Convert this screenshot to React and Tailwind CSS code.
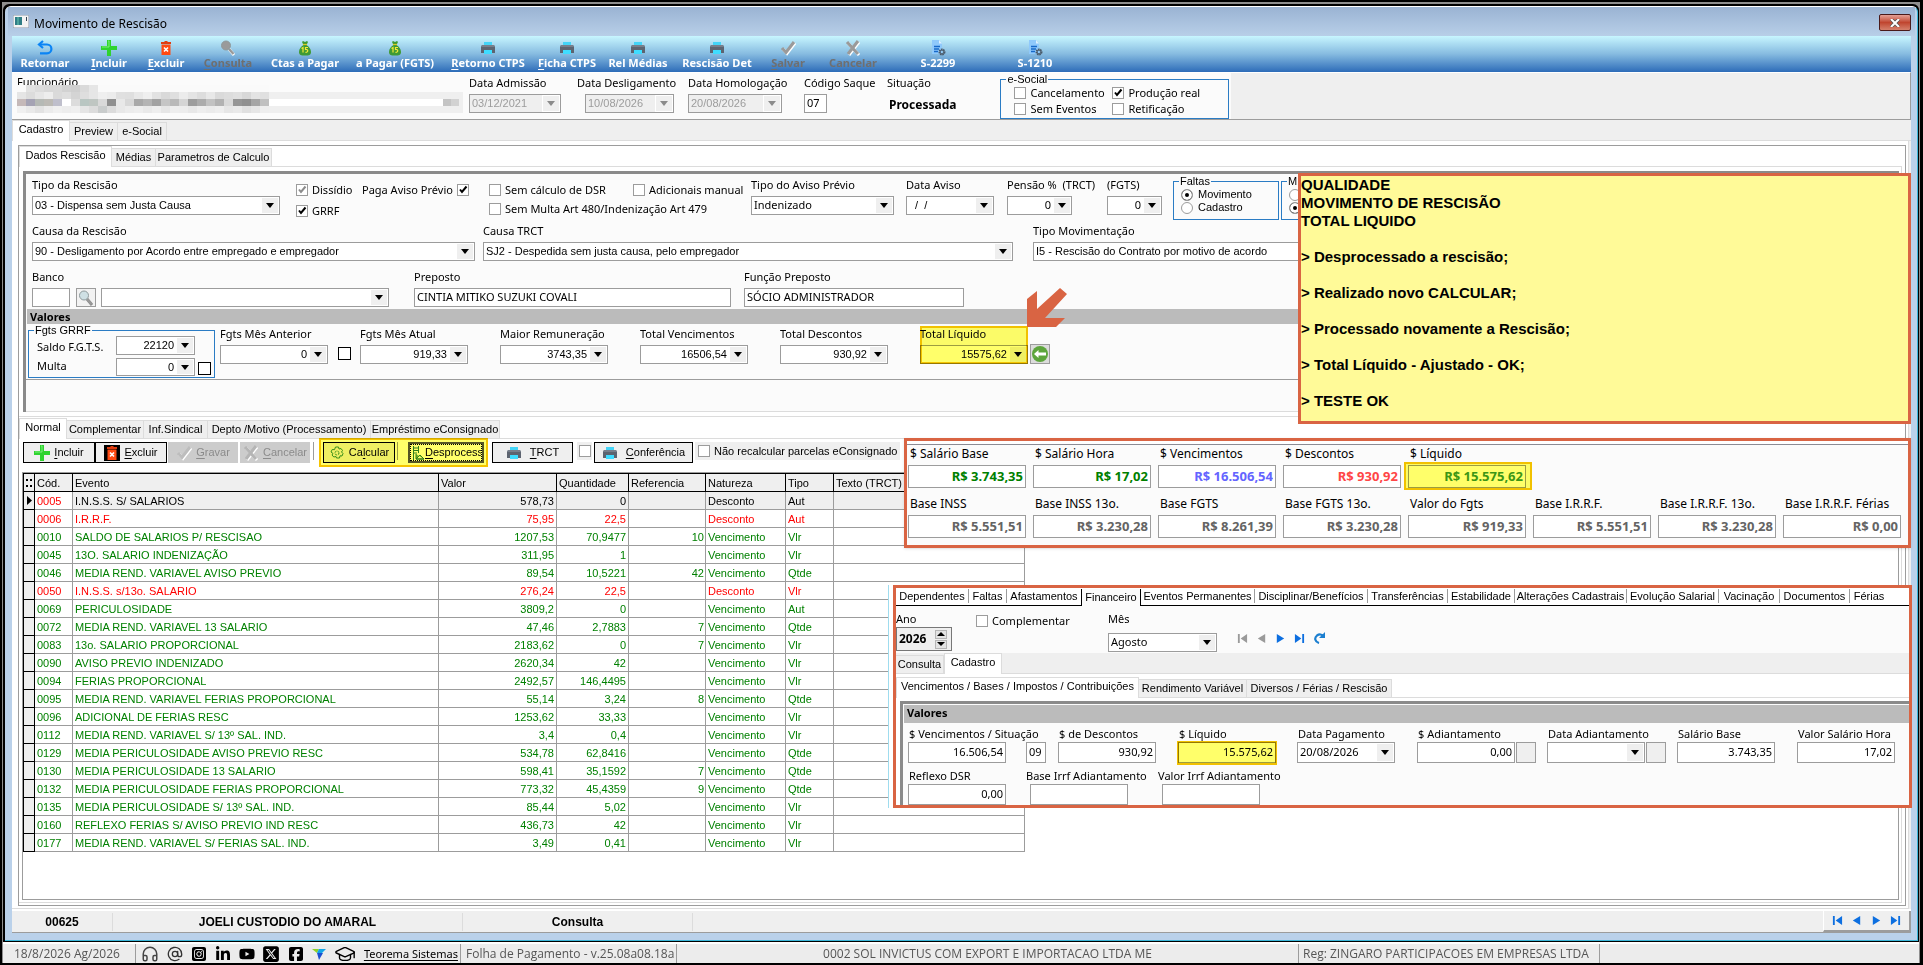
import { useId } from "react";
import { AtSign, GraduationCap, Headphones } from "lucide-react";
import { FaLinkedinIn, FaSquareFacebook, FaSquareInstagram, FaSquareXTwitter, FaYoutube } from "react-icons/fa6";

const events = [
  ["0005", "I.N.S.S. S/ SALARIOS", "578,73", "0", "", "Desconto", "Aut"],
  ["0006", "I.R.R.F.", "75,95", "22,5", "", "Desconto", "Aut"],
  ["0010", "SALDO DE SALARIOS P/ RESCISAO", "1207,53", "70,9477", "10", "Vencimento", "Vlr"],
  ["0045", "13O. SALARIO INDENIZAÇÃO", "311,95", "1", "", "Vencimento", "Vlr"],
  ["0046", "MEDIA REND. VARIAVEL AVISO PREVIO", "89,54", "10,5221", "42", "Vencimento", "Qtde"],
  ["0050", "I.N.S.S. s/13o. SALARIO", "276,24", "22,5", "", "Desconto", "Vlr"],
  ["0069", "PERICULOSIDADE", "3809,2", "0", "", "Vencimento", "Aut"],
  ["0072", "MEDIA REND. VARIAVEL 13 SALARIO", "47,46", "2,7883", "7", "Vencimento", "Qtde"],
  ["0083", "13o. SALARIO PROPORCIONAL", "2183,62", "0", "7", "Vencimento", "Vlr"],
  ["0090", "AVISO PREVIO INDENIZADO", "2620,34", "42", "", "Vencimento", "Vlr"],
  ["0094", "FERIAS PROPORCIONAL", "2492,57", "146,4495", "", "Vencimento", "Vlr"],
  ["0095", "MEDIA REND. VARIAVEL FERIAS PROPORCIONAL", "55,14", "3,24", "8", "Vencimento", "Qtde"],
  ["0096", "ADICIONAL DE FERIAS RESC", "1253,62", "33,33", "", "Vencimento", "Vlr"],
  ["0112", "MEDIA REND. VARIAVEL S/ 13º SAL. IND.", "3,4", "0,4", "", "Vencimento", "Vlr"],
  ["0129", "MEDIA PERICULOSIDADE AVISO PREVIO RESC", "534,78", "62,8416", "", "Vencimento", "Qtde"],
  ["0130", "MEDIA PERICULOSIDADE 13 SALARIO", "598,41", "35,1592", "7", "Vencimento", "Qtde"],
  ["0132", "MEDIA PERICULOSIDADE FERIAS PROPORCIONAL", "773,32", "45,4359", "9", "Vencimento", "Qtde"],
  ["0135", "MEDIA PERICULOSIDADE S/ 13º SAL. IND.", "85,44", "5,02", "", "Vencimento", "Vlr"],
  ["0160", "REFLEXO FERIAS S/ AVISO PREVIO IND RESC", "436,73", "42", "", "Vencimento", "Vlr"],
  ["0177", "MEDIA REND. VARIAVEL S/ FERIAS SAL. IND.", "3,49", "0,41", "", "Vencimento", "Vlr"],
];

/* ---------- icons ---------- */

function UndoIcon() {
  return (
    <svg viewBox="0 0 16 16" className="h-4 w-4 shrink-0" fill="none" stroke="#0a84f5" strokeWidth="2.2">
      <path d="M2 4.5h8a4.4 4.4 0 0 1 0 8.8H3" />
      <path d="M6 1L2 4.5 6 8" />
    </svg>
  );
}

function PlusIcon() {
  return (
    <svg viewBox="0 0 16 16" className="h-4 w-4 shrink-0">
      <path d="M6 0h4v6h6v4h-6v6H6v-6H0V6h6z" fill="#2fd32f" />
      <path d="M7 1h1v6H1" stroke="#7df07d" fill="none" />
    </svg>
  );
}

function TrashIcon() {
  return (
    <svg viewBox="0 0 16 16" className="h-4 w-4 shrink-0">
      <path d="M3 2h3l1-1h2l1 1h3v2H3z" fill="#e03c10" />
      <path d="M3.5 4.5h9V15h-9z" fill="#ff4a12" />
      <path d="M6 7.500l4 4m0-4l-4 4" stroke="#fff" strokeWidth="1.600" />
    </svg>
  );
}

function LensIcon({ light }) {
  return (
    <svg viewBox="0 0 16 16" className="h-4 w-4 shrink-0">
      <path d="M9 9l5 6" stroke={light ? "#8c8c8c" : "#fff"} strokeWidth="3" />
      <path d="M9 9l4.500 5" stroke="#999" strokeWidth="2.500" />
      <circle cx="6" cy="5.500" r="4.500" fill={light ? "#cfe0e4" : "#9a9a9a"} stroke="#8f9a9c" />
    </svg>
  );
}

function MoneyIcon() {
  return (
    <svg viewBox="0 0 16 16" className="h-4 w-4 shrink-0">
      <path d="M6 1l2 1 2-1 1 1-1.500 3C12 6.500 14 9 14 12c0 3-2 3.500-6 3.500S2 15 2 12c0-3 2-5.500 4.500-7L5 2z" fill="#3f9a35" />
      <path d="M6 4.500h4" stroke="#d9c928" strokeWidth="1.200" />
      <path d="M4.500 8.500L6 7.500v5M11 7.500H8.500v2c3-.5 3 3 0 2.800" fill="none" stroke="#f3ea3a" strokeWidth="1.200" />
    </svg>
  );
}

function PrinterIcon() {
  return (
    <svg viewBox="0 0 16 16" className="h-4 w-4 shrink-0">
      <path d="M4 2h8v4H4z" fill="#43d4f7" />
      <path d="M2 5h12l1 2v6H1V7z" fill="#5d6470" />
      <path d="M2 5h12l1 2H1z" fill="#777f8b" />
      <path d="M4 10h8v4H4z" fill="#3fdcff" />
    </svg>
  );
}

function CheckIcon({ pale }) {
  return (
    <svg viewBox="0 0 16 16" className="h-4 w-4 shrink-0" fill="none">
      <path d="M3 9l4 4.500L15 3" stroke="#fff" strokeWidth="3" />
      <path d="M2 8l4 4.500L14 2" stroke={pale ? "#bdbdbd" : "#9a9a9a"} strokeWidth="3" />
    </svg>
  );
}

function CrossIcon({ pale }) {
  return (
    <svg viewBox="0 0 16 16" className="h-4 w-4 shrink-0" fill="none">
      <path d="M3 3l11 12M14 2L4 15" stroke="#fff" strokeWidth="3" />
      <path d="M2 2l11 12M13 1L3 14" stroke={pale ? "#b5b5b5" : "#9a9a9a"} strokeWidth="3" />
    </svg>
  );
}

function DocIcon() {
  return (
    <svg viewBox="0 0 16 16" className="h-4 w-4 shrink-0">
      <path d="M2 0h7l3 3.500V14H2z" fill="#8fc9fb" />
      <path d="M9 0v3.500h3z" fill="#dff0ff" />
      <path d="M4 6.500h6M4 9h5M4 11.500h4" stroke="#1769c9" strokeWidth="1.300" />
      <circle cx="12" cy="12" r="2.500" fill="none" stroke="#4a5b6b" strokeWidth="2" strokeDasharray="1.500 .6" />
      <circle cx="12" cy="12" r="2" fill="none" stroke="#4a5b6b" />
    </svg>
  );
}

function GearIcon() {
  return (
    <svg viewBox="0 0 16 16" className="h-4 w-4 shrink-0" fill="none" stroke="#3b8f3b">
      <path d="M6.500 2h3l.5 2 2-.5 1.500 2L12.500 7l1.500 1.500-1 2.500-2-.2-.5 2.200h-3L7 11.500l-2.200.5L3 10l1-1.500L2 7l1.200-2.500 2.300.2z" />
      <circle cx="8" cy="8" r="2" strokeDasharray="2 1" />
    </svg>
  );
}

function UnprocessIcon() {
  return (
    <svg viewBox="0 0 14 16" className="h-4 w-[14px] shrink-0" fill="none" stroke="#2f7f3f">
      <path d="M2.500 1v14M7.500 1v7M3 3h4M3 5.500h4M3 8h3" />
      <path d="M5 9v5h8M5 14l4-4 4 4z" fill="#7db55c" />
    </svg>
  );
}

function NavIcon({ kind, gray }) {
  const color = gray ? "#9a9a9a" : "#0d6fe0";
  const shapes = {
    first: <path d="M1 1h2v10H1zM11 1v10L4 6z" />,
    prev: <path d="M10 1v10L2 6z" />,
    next: <path d="M2 1v10l8-5z" />,
    last: <path d="M1 1v10l7-5zM9 1h2v10H9z" />,
  };
  return (
    <svg viewBox="0 0 12 12" className="h-[11px] w-[11px]" fill={color}>
      {shapes[kind]}
    </svg>
  );
}

/* ---------- form pieces ---------- */

function Arrow({ gray }) {
  return (
    <span className="flex w-[18px] shrink-0 items-center justify-center border border-white bg-[#efefef]">
      <svg viewBox="0 0 8 5" className="h-[5px] w-2">
        <path d="M0 0h8L4 5z" fill={gray ? "#8b8b8b" : "#000"} />
      </svg>
    </span>
  );
}

function Label({ id, children, className = "" }) {
  return (
    <label htmlFor={id} className={`block h-4 font-['Noto_Sans',sans-serif] leading-4 whitespace-nowrap ${className}`}>
      {children}
    </label>
  );
}

// Bordered box: plain text box, drop-down list, or text box with an arrow
function Box({ id, label, value = "", kind = "text", right, tahoma, disabled, className = "h-[19px]", textClass = "" }) {
  const text = `min-w-0 flex-1 appearance-none bg-transparent px-[2px] outline-none ${right ? "text-right" : ""} ${tahoma ? "font-['Noto_Sans',sans-serif]" : ""} ${textClass}`;
  return (
    <div className={`flex border border-[#9c9c9c] ${disabled ? "bg-[#efefef] text-[#9c9c9c]" : "bg-white"} ${className}`}>
      {kind === "select" ? (
        <select id={id} aria-label={label} defaultValue={value} className={text}>
          <option>{value}</option>
        </select>
      ) : (
        <input id={id} aria-label={label} defaultValue={value} disabled={disabled} className={text} />
      )}
      {kind !== "text" && <Arrow gray={disabled} />}
    </div>
  );
}

function Field({ label, width, labelClass, boxClass, ...box }) {
  const id = useId();
  return (
    <div className={`shrink-0 ${width}`}>
      <Label id={id} className={labelClass || "mb-[3px]"}>{label}</Label>
      <Box id={id} className={boxClass} {...box} />
    </div>
  );
}

function Tick({ id, label, checked, gray, className = "h-3 w-3 border-[#9c9c9c]" }) {
  return (
    <span className="relative inline-flex shrink-0">
      <input id={id} type="checkbox" aria-label={label} defaultChecked={checked} className={`appearance-none border bg-white ${className}`} />
      {checked && (
        <svg viewBox="0 0 12 12" className="pointer-events-none absolute inset-0 h-3 w-3" fill="none">
          <path d="M3 5.500l2 2.500 4.500-5.500" stroke={gray ? "#8b8b8b" : "#000"} strokeWidth="2" />
        </svg>
      )}
    </span>
  );
}

function Check({ label, checked, gray, before, className = "", textClass = "font-['Noto_Sans',sans-serif]" }) {
  const id = useId();
  return (
    <div className={`flex h-4 items-center gap-1 whitespace-nowrap ${before ? "flex-row-reverse justify-end" : ""} ${className}`}>
      <Tick id={id} checked={checked} gray={gray} />
      <label htmlFor={id} className={textClass}>{label}</label>
    </div>
  );
}

function Radio({ label, name, hint, checked }) {
  return (
    <label className="flex h-[13px] items-center gap-[5px]">
      <input
        type="radio"
        name={name}
        aria-label={hint}
        defaultChecked={checked}
        className="h-3 w-3 shrink-0 appearance-none rounded-full border border-[#9c9c9c] bg-white checked:bg-black checked:shadow-[inset_0_0_0_3px_white]"
      />
      {label}
    </label>
  );
}

// First tab is the raised one unless told otherwise
function Tabs({ items, active = 0, className = "" }) {
  return (
    <div role="tablist" className={`flex h-[21px] items-end border-b border-[#dcdcdc] ${className}`}>
      {items.map(([text, width], i) => (
        <button
          key={text}
          role="tab"
          aria-selected={i === active}
          className={
            i === active
              ? `-mb-px h-[21px] shrink-0 border-x border-t border-[#dcdcdc] bg-white pb-1 whitespace-nowrap ${width}`
              : `h-[18px] shrink-0 border-t border-r border-[#dcdcdc] bg-[#efefef] whitespace-nowrap ${width}`
          }
        >
          {text}
        </button>
      ))}
    </div>
  );
}

/* ---------- window parts ---------- */

const tools = [
  ["Retornar", UndoIcon, "w-[66px]"],
  ["Incluir", PlusIcon, "w-[62px]", 1],
  ["Excluir", TrashIcon, "w-[52px]", 1],
  ["Consulta", LensIcon, "w-[72px]", 1, true],
  ["Ctas a Pagar", MoneyIcon, "w-[82px]"],
  ["a Pagar (FGTS)", MoneyIcon, "w-[98px]"],
  ["Retorno CTPS", PrinterIcon, "w-[88px]", 1],
  ["Ficha CTPS", PrinterIcon, "w-[70px]", 1],
  ["Rel Médias", PrinterIcon, "w-[72px]"],
  ["Rescisão Det", PrinterIcon, "w-[86px]"],
  ["Salvar", CheckIcon, "w-[56px]", 1, true],
  ["Cancelar", CrossIcon, "w-[74px]", 0, true],
  ["S-2299", DocIcon, "w-[96px]"],
  ["S-1210", DocIcon, "w-[98px]"],
];

function Toolbar() {
  return (
    <div className="flex h-9 bg-gradient-to-b from-[#c8f6ff] via-[#86bbe0] to-[#2d6cb8]">
      {tools.map(([text, Icon, width, under, off]) => (
        <button
          key={text}
          disabled={off}
          className={`flex shrink-0 flex-col items-center pt-1 font-['Noto_Sans',sans-serif] leading-[13px] font-bold whitespace-nowrap ${width} ${off ? "text-[#6f6f6f]" : "text-white"}`}
        >
          <Icon />
          <span>
            {under ? <u className="underline-offset-2">{text[0]}</u> : text[0]}
            {text.slice(1)}
          </span>
        </button>
      ))}
    </div>
  );
}

// Pixelated strip over the employee name
const mosaic = [
  "fafafa e2e2e2 dcdcdc d8d8d8 d9d9d9 d2d2d2 cfcfcf dadada e6e6e6 fafafa fafafa fafafa fafafa fafafa fafafa fafafa fafafa fafafa fafafa fafafa fafafa fafafa fafafa fafafa fafafa fafafa fafafa fafafa",
  "e5e5e5 dcdcdc e6e6e6 ededed dadada dedede d4d4d4 dedede e6e6e6 efefef ececec e0e0e0 dfdfdf e8e8e8 efefef e2e2e2 d9d9d9 dfdfdf ececec e4e4e4 dddddd e8e8e8 dadada dddddd e0e0e0 d8d8d8 e4e4e4 e0e0e0",
  "c5b9b9 a5a3b4 b5b9b5 bcbab5 bfbfcc ffffff dcdcdc b9c6c2 bfc6c2 d9d9d9 909090 e8e8e8 d8d8d8 a9a9a9 b4b4b4 a2a2a2 c5c5c5 b9b9b9 d5d5d5 9d9d9d acacac c2c2c2 b2b2b2 d9d9d9 959595 8f8f8f a5a5a5 c0c0c0",
  "f0f0f0 e9e9e9 e2e2e2 ebebeb f0f0f0 ededed efefef e5e5e5 dcdcdc c9cccc dcdcdc e8e8e8 ececec eeeeee e9e9e9 eeeeee e6e6e6 eeeeee ededed e8e8e8 eeeeee ebebeb eeeeee e6e6e6 e9e9e9 e0e0e0 e6e6e6 eeeeee",
];

function Mosaic() {
  return (
    <div className="-mt-2 w-[446px]">
      {mosaic.map((row, r) => (
        <div key={r} className={`flex h-[7px] ${r > 0 ? "bg-[#efefef]" : ""}`}>
          {row.split(" ").map((c, i) => (
            <span key={i} className="w-[9px]" style={{ background: `#${c}` }} />
          ))}
          {r === 2 && (
            <>
              <span className="flex-1 bg-white" />
              <span className="w-2 bg-[#c4c4c4]" />
              <span className="mr-1 w-2 bg-[#d2d2d2]" />
            </>
          )}
        </div>
      ))}
    </div>
  );
}

function Header() {
  return (
    <div className="flex h-12 border-t border-r border-b border-[#9c9c9c] border-t-white bg-[#efefef]">
      <div className="flex bg-[#fbfbfb] pr-[2px] pl-[5px]">
        <div className="mr-[6px]">
          <div className="h-5 pt-[1px] font-['Noto_Sans',sans-serif]">Funcionário</div>
          <Mosaic />
        </div>
        <div className="flex pt-[2px]">
          <Field label="Data Admissão" value="03/12/2021" kind="combo" width="mr-[24px] w-[92px]" disabled />
          <Field label="Data Desligamento" value="10/08/2026" kind="combo" width="mr-[14px] w-[89px]" labelClass="mb-[3px] -ml-2" disabled />
          <Field label="Data Homologação" value="20/08/2026" kind="combo" width="mr-[22px] w-[94px]" disabled />
          <Field label="Código Saque" value="07" tahoma width="mr-[60px] w-[23px]" />
          <div className="mr-[44px] font-['Noto_Sans',sans-serif]">
            <div className="leading-4">Situação</div>
            <div className="mt-[6px] pl-[2px] text-[12px] leading-4 font-bold">Processada</div>
          </div>
        </div>
        <fieldset className="h-[46px] w-[229px] border border-[#2b7cc4] pl-[13px]">
          <legend className="-ml-2 px-[1px] leading-3">e-Social</legend>
          <div className="grid grid-cols-[98px_1fr]">
            <Check label="Cancelamento" />
            <Check label="Produção real" checked />
            <Check label="Sem Eventos" />
            <Check label="Retificação" />
          </div>
        </fieldset>
      </div>
    </div>
  );
}

function RescisaoForm() {
  return (
    <div className="border-t-[3px] border-l-[3px] border-[#8a8a8a] bg-[#fbfbfb]">
      <div className="flex h-[49px] pl-[6px]">
        <div className="pt-[3px]">
          <Field label="Tipo da Rescisão" value="03 - Dispensa sem Justa Causa" kind="select" width="w-[248px]" />
        </div>
        <div className="ml-4 w-[66px] pt-2">
          <Check label="Dissídio" checked gray />
          <Check label="GRRF" checked className="mt-[5px]" />
        </div>
        <div className="w-[127px] pt-2">
          <Check label="Paga Aviso Prévio" checked before />
        </div>
        <div className="w-[262px] pt-2">
          <div className="flex">
            <Check label="Sem cálculo de DSR" className="w-[144px]" />
            <Check label="Adicionais manual" />
          </div>
          <Check label="Sem Multa Art 480/Indenização Art 479" className="mt-[3px]" />
        </div>
        <div className="flex pt-[3px]">
          <Field label="Tipo do Aviso Prévio" value="Indenizado" kind="select" tahoma width="mr-3 w-[143px]" />
          <Field label="Data Aviso" value="  /  /" kind="combo" width="mr-[13px] w-[88px]" />
          <Field label="Pensão %  (TRCT)" value="0" kind="combo" right tahoma width="mr-[35px] w-[65px]" labelClass="mb-[3px] whitespace-pre" />
          <Field label="(FGTS)" value="0" kind="combo" right tahoma width="mr-[11px] w-[55px]" />
        </div>
        <fieldset className="mt-[1px] mr-[2px] h-[45px] w-[106px] shrink-0 border border-[#2b7cc4] pt-[1px] pl-[7px]">
          <legend className="-ml-[2px] px-[1px] leading-3">Faltas</legend>
          <Radio label="Movimento" name="faltas" checked />
          <Radio label="Cadastro" name="faltas" />
        </fieldset>
        <fieldset className="mt-[1px] h-[45px] w-[106px] shrink-0 border border-[#2b7cc4] pt-[1px] pl-[7px]">
          <legend className="-ml-[2px] px-[1px] leading-3">M</legend>
          <Radio hint="Médias do movimento" name="medias" />
          <Radio hint="Médias do cadastro" name="medias" checked />
        </fieldset>
      </div>

      <div className="flex h-[46px] pl-[6px]">
        <Field label="Causa da Rescisão" value="90 - Desligamento por Acordo entre empregado e empregador" kind="select" width="mr-2 w-[443px]" />
        <Field label="Causa TRCT" value="SJ2 - Despedida sem justa causa, pelo empregador" kind="select" width="mr-5 w-[530px]" />
        <Field label="Tipo Movimentação" value="I5 - Rescisão do Contrato por motivo de acordo" kind="select" width="w-[443px]" />
      </div>

      <div className="flex h-10 items-end pb-[2px] pl-[6px]">
        <Field label="Banco" width="mr-[6px] w-[38px]" />
        <button aria-label="Pesquisar banco" className="mr-[5px] flex h-[19px] w-5 items-center justify-center border border-[#9c9c9c] bg-[#f2f2f2]">
          <LensIcon light />
        </button>
        <Box label="Nome do banco" kind="select" className="mr-[25px] h-[19px] w-[288px]" />
        <Field label="Preposto" value="CINTIA MITIKO SUZUKI COVALI" tahoma width="mr-[13px] w-[317px]" />
        <Field label="Função Preposto" value="SÓCIO ADMINISTRADOR" tahoma width="w-[220px]" />
      </div>

      <div className="ml-[1px] h-[15px] bg-[#bbbbbb] pl-[3px] font-['Noto_Sans',sans-serif] leading-[15px] font-bold">Valores</div>

      <div className="flex h-[55px] pl-[2px]">
        <fieldset className="h-[54px] w-[187px] border border-[#2b7cc4] pl-2">
          <legend className="-ml-[3px] px-[1px] leading-3">Fgts GRRF</legend>
          <div className="flex h-[22px]">
            <label htmlFor="saldo" className="w-[79px] pt-[3px] font-['Noto_Sans',sans-serif]">Saldo F.G.T.S.</label>
            <Box id="saldo" value="22120" kind="combo" right className="h-[19px] w-[79px]" />
          </div>
          <div className="flex h-[19px]">
            <label htmlFor="multa" className="w-[79px] font-['Noto_Sans',sans-serif]">Multa</label>
            <Box id="multa" value="0" kind="combo" right className="mr-[3px] h-[18px] w-[79px]" />
            <span className="pt-1">
              <Tick label="Multa manual" className="h-[13px] w-[13px] border-black" />
            </span>
          </div>
        </fieldset>
        <div className="ml-[5px] flex items-start pt-[2px]">
          <Field label="Fgts Mês Anterior" value="0" kind="combo" right width="w-[108px]" />
          <span className="mt-[21px] mr-[9px] ml-[10px] flex">
            <Tick label="Fgts mês anterior manual" className="h-[13px] w-[13px] border-black" />
          </span>
          <Field label="Fgts Mês Atual" value="919,33" kind="combo" right width="mr-8 w-[108px]" />
          <Field label="Maior Remuneração" value="3743,35" kind="combo" right width="mr-8 w-[108px]" />
          <Field label="Total Vencimentos" value="16506,54" kind="combo" right width="mr-8 w-[108px]" />
          <Field label="Total Descontos" value="930,92" kind="combo" right width="mr-8 w-[108px]" />
          <div className="relative flex">
            <Field label="Total Líquido" value="15575,62" kind="combo" right width="w-[108px]" />
            <div className="pointer-events-none absolute inset-0 border-2 border-[#f5c400] bg-[#ffff6a] mix-blend-multiply" />
          </div>
          <button aria-label="Aplicar total líquido" className="mt-[18px] ml-[2px] flex h-5 w-5 items-center justify-center border border-[#9c9c9c] bg-[#dcdcdc]">
            <svg viewBox="0 0 16 16" className="h-4 w-4">
              <circle cx="8" cy="8" r="8" fill="#5da53c" />
              <path d="M2 8l4.500-4v2.500H14v3H6.500V12z" fill="#fff" />
            </svg>
          </button>
        </div>
      </div>
      <div className="h-[33px] border-t border-b border-t-[#9c9c9c] border-b-[#dcdcdc]" />
    </div>
  );
}

function ActionButton({ icon, text, width, off, under = 0 }) {
  return (
    <button
      disabled={off}
      className={`flex h-[21px] shrink-0 items-center justify-center gap-1 whitespace-nowrap ${width} ${off ? "bg-[#cccccc] text-[#8b8b8b]" : "border border-black bg-[#efefef]"}`}
    >
      {icon}
      <span>
        {text.slice(0, under)}
        <u className="underline-offset-2">{text[under]}</u>
        {text.slice(under + 1)}
      </span>
    </button>
  );
}

function Actions() {
  return (
    <div className="flex h-[33px] items-start pt-[3px] pl-1">
      <ActionButton icon={<PlusIcon />} text="Incluir" width="w-[72px]" />
      <ActionButton icon={<span className="bg-black"><TrashIcon /></span>} text="Excluir" width="mr-[1px] w-[72px]" />
      <ActionButton icon={<CheckIcon pale />} text="Gravar" width="mr-[2px] w-[70px]" off />
      <ActionButton icon={<CrossIcon pale />} text="Cancelar" width="w-[70px]" off />
      <span className="ml-[3px] h-[18px] w-[6px] border-l border-[#9c9c9c]" />
      <div className="relative flex">
        <ActionButton icon={<GearIcon />} text="Calcular" width="ml-1 w-[72px]" under={2} />
        <span className="mr-[2px] ml-[2px] h-[18px] w-[9px] border-l border-[#9c9c9c]" />
        <div className="flex border-2 border-[#555]">
          <button className="flex h-[17px] w-[72px] items-center overflow-hidden border border-dotted border-black whitespace-nowrap">
            <UnprocessIcon />
            <span><u className="underline-offset-2">D</u>esprocess</span>
          </button>
        </div>
        <div className="pointer-events-none absolute -inset-y-1 -right-1 left-0 border-2 border-[#f5c400] bg-[#ffff6a] mix-blend-multiply" />
      </div>
      <ActionButton icon={<PrinterIcon />} text="TRCT" width="ml-2 w-[81px] gap-2" />
      <span className="mr-[2px] ml-1 flex h-[18px] w-[15px] items-center justify-center self-start bg-[#efefef]">
        <Tick label="TRCT" />
      </span>
      <ActionButton icon={<PrinterIcon />} text="Conferência" width="w-[99px] gap-2" />
      <Check label="Não recalcular parcelas eConsignado" textClass="" className="ml-[2px] h-[18px] bg-[#efefef] px-[3px]" />
    </div>
  );
}

const columns = [
  ["", "w-[11px]"],
  ["Cód.", "w-[38px]"],
  ["Evento", "w-[366px]"],
  ["Valor", "w-[118px]"],
  ["Quantidade", "w-[72px]"],
  ["Referencia", "w-[77px]"],
  ["Natureza", "w-[80px]"],
  ["Tipo", "w-[48px]"],
  ["Texto (TRCT)", "w-[191px]"],
];

function EventsTable() {
  return (
    <table className="w-[1001px] table-fixed border-collapse">
      <thead>
        <tr className="h-[18px] bg-[#efefef]">
          {columns.map(([text, width], i) => (
            <th key={i} className={`border border-black p-0 pl-[2px] text-left leading-4 font-normal whitespace-nowrap ${width}`}>
              {i === 0 ? <span className="block h-2 w-[6px] border-y-2 border-dotted border-black" /> : text}
            </th>
          ))}
        </tr>
      </thead>
      <tbody>
        {events.map(([code, name, value, qty, ref, nature, type], i) => {
          const tone = nature === "Desconto" ? "text-[#ff0000]" : "text-[#008000]";
          return (
            <tr key={code} className={`h-[18px] ${i === 0 ? "bg-[#efefef] text-black" : tone}`}>
              <td className="border border-black bg-[#efefef] p-0">
                {i === 0 && (
                  <svg viewBox="0 0 5 9" className="ml-[3px] h-[9px] w-[5px]">
                    <path d="M0 0l5 4.500L0 9z" />
                  </svg>
                )}
              </td>
              <td className={`border border-[#9c9c9c] bg-white p-0 pl-[2px] leading-4 ${tone}`}>{code}</td>
              <td className="border border-[#9c9c9c] p-0 pl-[2px] leading-4 whitespace-nowrap">{name}</td>
              <td className="border border-[#9c9c9c] p-0 pr-[2px] text-right leading-4">{value}</td>
              <td className="border border-[#9c9c9c] p-0 pr-[2px] text-right leading-4">{qty}</td>
              <td className="border border-[#9c9c9c] p-0 pr-[1px] text-right leading-4">{ref}</td>
              <td className="border border-[#9c9c9c] p-0 pl-[2px] leading-4">{nature}</td>
              <td className="border border-[#9c9c9c] p-0 pl-[2px] leading-4">{type}</td>
              <td className="border border-[#9c9c9c] p-0" />
            </tr>
          );
        })}
      </tbody>
    </table>
  );
}

/* ---------- pasted panels ---------- */

function Note() {
  return (
    <div className="absolute top-[173px] right-[12px] left-[1298px] h-[251px] border-[3px] border-[#d96443] bg-[#fffa98] font-['Liberation_Sans',Arial,sans-serif] text-[15px] leading-[18px] font-bold whitespace-pre-line">
      {`QUALIDADE
      MOVIMENTO DE RESCISÃO
      TOTAL LIQUIDO

      > Desprocessado a rescisão;

      > Realizado novo CALCULAR;

      > Processado novamente a Rescisão;

      > Total Líquido - Ajustado - OK;

      > TESTE OK`}
    </div>
  );
}

const totals = [
  ["$ Salário Base", "R$ 3.743,35", "text-[#008000]"],
  ["$ Salário Hora", "R$ 17,02", "text-[#008000]"],
  ["$ Vencimentos", "R$ 16.506,54", "text-[#6464ff]"],
  ["$ Descontos", "R$ 930,92", "text-[#ff4646]"],
  ["$ Líquido", "R$ 15.575,62", "text-[#3c9632]"],
];

const bases = [
  ["Base INSS", "R$ 5.551,51"],
  ["Base INSS 13o.", "R$ 3.230,28"],
  ["Base FGTS", "R$ 8.261,39"],
  ["Base FGTS 13o.", "R$ 3.230,28"],
  ["Valor do Fgts", "R$ 919,33"],
  ["Base I.R.R.F.", "R$ 5.551,51"],
  ["Base I.R.R.F. 13o.", "R$ 3.230,28"],
  ["Base I.R.R.F. Férias", "R$ 0,00"],
];

function Summary() {
  return (
    <div className="absolute top-[438px] right-[12px] left-[904px] h-[110px] border-[3px] border-[#d96443] bg-white pt-[3px] shadow-sm">
      <div className="h-full border-t border-[#8b8b94] bg-[#fbfbfb] pt-[1px] pl-[1px] text-[12px]">
        <div className="flex h-[50px] gap-[7px]">
          {totals.map(([label, value, tone], i) => (
            <div key={label} className="relative">
              <Field label={label} value={value} right tahoma width="w-[118px]" labelClass="mb-[3px] ml-[2px]" boxClass="h-[23px]" textClass={`text-[13px] font-bold ${tone}`} />
              {i === 4 && (
                <div className="pointer-events-none absolute top-4 -right-[6px] -left-1 h-7 border-2 border-[#f5c400] bg-[#ffff6a] mix-blend-multiply" />
              )}
            </div>
          ))}
        </div>
        <div className="flex gap-[7px]">
          {bases.map(([label, value]) => (
            <Field key={label} label={label} value={value} right tahoma width="w-[118px]" labelClass="mb-[3px] ml-[2px]" boxClass="h-[23px]" textClass="text-[13px] font-bold text-[#646464]" />
          ))}
        </div>
      </div>
    </div>
  );
}

const sections = [
  ["Dependentes", "w-[73px]"],
  ["Faltas", "w-[38px]"],
  ["Afastamentos", "w-[74px]"],
  ["Financeiro", "w-[60px]"],
  ["Eventos Permanentes", "w-[114px]"],
  ["Disciplinar/Benefícios", "w-[113px]"],
  ["Transferências", "w-[80px]"],
  ["Estabilidade", "w-[67px]"],
  ["Alterações Cadastrais", "w-[112px]"],
  ["Evolução Salarial", "w-[92px]"],
  ["Vacinação", "w-[61px]"],
  ["Documentos", "w-[70px]"],
  ["Férias", "w-[38px]"],
];

function Financeiro() {
  const box = "h-[21px]";
  const w = "w-[98px]";
  return (
    <div className="absolute top-[585px] right-[11px] left-[888px] h-[223px] border-l border-[#9fdcee] bg-white pl-1">
      <div className="h-full overflow-hidden border-[3px] border-[#d96443] bg-white">
        <div className="flex h-[18px] items-end border-b border-black">
          {sections.map(([text, width], i) => (
            <button
              key={text}
              className={
                i === 3
                  ? `-mb-px h-[17px] shrink-0 border-x border-black bg-[#fbfbfb] whitespace-nowrap ${width}`
                  : `mb-[2px] h-[14px] shrink-0 leading-[14px] whitespace-nowrap ${width} ${i === 2 || i === 12 ? "" : "border-r border-[#9c9c9c]"}`
              }
            >
              {text}
            </button>
          ))}
        </div>
        <div className="flex h-[47px] bg-[#fbfbfb]">
          <div className="mr-6 w-[56px] pt-[5px]">
            <Label id="ano">Ano</Label>
            <div className="flex h-6 items-center border border-[#777] bg-[#efefef] pr-1">
              <input id="ano" defaultValue="2026" className="min-w-0 flex-1 bg-transparent pl-[2px] font-['Noto_Sans',sans-serif] text-[12px] font-bold" />
              <div className="flex flex-col gap-[1px]">
                <button aria-label="Ano seguinte" className="flex h-[9px] w-3 items-center justify-center border border-[#b5b5b5] bg-[#e3e3e3]">
                  <svg viewBox="0 0 8 4" className="h-1 w-2"><path d="M0 4h8L4 0z" /></svg>
                </button>
                <button aria-label="Ano anterior" className="flex h-[9px] w-3 items-center justify-center border border-[#b5b5b5] bg-[#e3e3e3]">
                  <svg viewBox="0 0 8 4" className="h-1 w-2"><path d="M0 0h8L4 4z" /></svg>
                </button>
              </div>
            </div>
          </div>
          <Check label="Complementar" className="mt-[7px] w-[132px]" />
          <div className="pt-[5px]">
            <Label id="mes" className="mb-[6px]">Mês</Label>
            <Box id="mes" value="Agosto" kind="select" tahoma className="h-[19px] w-[109px]" />
          </div>
          <div className="ml-5 flex gap-2 self-end pb-[9px]">
            <button aria-label="Primeiro"><NavIcon kind="first" gray /></button>
            <button aria-label="Anterior"><NavIcon kind="prev" gray /></button>
            <button aria-label="Próximo"><NavIcon kind="next" /></button>
            <button aria-label="Último"><NavIcon kind="last" /></button>
            <button aria-label="Atualizar">
              <svg viewBox="0 0 12 12" className="ml-[1px] h-3 w-3" fill="none" stroke="#1c7fd0" strokeWidth="2.200">
                <path d="M5 11C1 10 0 6 3 3.500 5 2 8 2 10 4.500" />
                <path d="M11 0v6H5z" fill="#1c7fd0" stroke="none" />
              </svg>
            </button>
          </div>
        </div>
        <Tabs items={[["Consulta", "w-[48px]"], ["Cadastro", "w-[58px]"]]} active={1} className="bg-[#efefef]" />
        <Tabs
          items={[
            ["Vencimentos / Bases / Impostos / Contribuições", "w-[243px]"],
            ["Rendimento Variável", "w-[108px]"],
            ["Diversos / Férias / Rescisão", "w-[145px]"],
          ]}
          className="mt-[3px]"
        />
        <div className="mt-[3px] ml-1 border-t-[3px] border-l-[3px] border-[#8a8a8a] bg-[#fbfbfb]">
          <div className="mt-[1px] ml-[1px] h-[18px] bg-[#bbbbbb] pl-[3px] font-['Noto_Sans',sans-serif] leading-4 font-bold">Valores</div>
          <div className="flex h-[42px] items-start pt-[3px] pl-[5px]">
            <Field label="$ Vencimentos / Situação" value="16.506,54" right tahoma width={`mr-5 ${w}`} labelClass="ml-[1px]" boxClass={box} />
            <Box label="Situação" value="09" tahoma className="mt-4 mr-3 h-[21px] w-5" textClass="px-[1px]" />
            <Field label="$ de Descontos" value="930,92" right tahoma width={`mr-[22px] ${w}`} labelClass="ml-[1px]" boxClass={box} />
            <div className="relative mr-[21px]">
              <Field label="$ Líquido" value="15.575,62" right tahoma width={w} labelClass="ml-[1px]" boxClass={box} />
              <div className="pointer-events-none absolute -inset-x-[1px] top-[15px] h-6 border-2 border-[#f5c400] bg-[#ffff6a] mix-blend-multiply" />
            </div>
            <Field label="Data Pagamento" value="20/08/2026" kind="combo" tahoma width={`mr-[22px] ${w}`} labelClass="ml-[1px]" boxClass={box} />
            <Field label="$ Adiantamento" value="0,00" right tahoma width={w} labelClass="ml-[1px]" boxClass={box} />
            <span className="mt-4 mr-[11px] ml-[1px] h-[21px] w-5 border border-[#9c9c9c] bg-[#efefef]" />
            <Field label="Data Adiantamento" kind="combo" width={w} labelClass="ml-[1px]" boxClass={box} />
            <span className="mt-4 mr-[11px] ml-[1px] h-[21px] w-5 border border-[#9c9c9c] bg-[#efefef]" />
            <Field label="Salário Base" value="3.743,35" right tahoma width={`mr-[22px] ${w}`} labelClass="ml-[1px]" boxClass={box} />
            <Field label="Valor Salário Hora" value="17,02" right tahoma width={w} labelClass="ml-[1px]" boxClass={box} />
          </div>
          <div className="flex pt-[3px] pl-[5px]">
            <Field label="Reflexo DSR" value="0,00" right tahoma width={`mr-6 ${w}`} labelClass="ml-[1px]" boxClass={box} />
            <Field label="Base Irrf Adiantamento" width={`mr-[34px] ${w}`} labelClass="-ml-1" boxClass={box} />
            <Field label="Valor Irrf Adiantamento" width={w} labelClass="-ml-1" boxClass={box} />
          </div>
        </div>
      </div>
    </div>
  );
}

function Footer() {
  return (
    <div className="flex h-[21px] items-stretch border-t-2 border-white bg-[#ececec] font-['Open_Sans','Noto_Sans',sans-serif] text-[12px] leading-[19px] whitespace-nowrap text-[#555]">
      <div className="w-[133px] border-r border-[#9c9c9c] pl-[11px]">18/8/2026 Ag/2026</div>
      <div className="flex w-[325px] items-center justify-between border-r border-[#9c9c9c] pr-[2px] pl-[5px] text-black">
        <a href="#suporte" aria-label="Suporte"><Headphones className="h-[18px] w-[18px] text-[#444]" strokeWidth={2} /></a>
        <a href="#email" aria-label="E-mail"><AtSign className="h-4 w-4 text-[#333]" strokeWidth={2} /></a>
        <a href="#instagram" aria-label="Instagram"><FaSquareInstagram className="h-4 w-4" /></a>
        <a href="#linkedin" aria-label="LinkedIn"><FaLinkedinIn className="h-4 w-4" /></a>
        <a href="#youtube" aria-label="YouTube"><FaYoutube className="h-4 w-4" /></a>
        <a href="#x" aria-label="X"><FaSquareXTwitter className="h-[18px] w-[18px]" /></a>
        <a href="#facebook" aria-label="Facebook"><FaSquareFacebook className="h-4 w-4" /></a>
        <a href="#teorema" aria-label="Teorema">
          <svg viewBox="0 0 14 12" className="h-3 w-[14px]">
            <path d="M0 1h7l-2 4z" fill="#8ed12a" />
            <path d="M7 1h7l-4 4H5z" fill="#13a5e8" />
            <path d="M5 5h6l-4 7z" fill="#1a4fd0" />
          </svg>
        </a>
        <a href="#academia" aria-label="Academia"><GraduationCap className="h-[22px] w-[22px]" strokeWidth={1.500} /></a>
        <a href="#site" className="font-['Noto_Sans',sans-serif] text-[11px] underline underline-offset-2">Teorema Sistemas</a>
      </div>
      <div className="w-[216px] border-r border-[#9c9c9c] pl-[5px]">Folha de Pagamento - v.25.08a08.18a</div>
      <div className="flex-1 border-r border-[#9c9c9c] text-center">0002 SOL INVICTUS COM EXPORT E IMPORTACAO LTDA ME</div>
      <div className="w-[301px] border-r border-[#9c9c9c] pl-1">Reg: ZINGARO PARTICIPACOES EM EMPRESAS LTDA</div>
      <div className="w-[319px]" />
    </div>
  );
}

function App() {
  return (
    <div className="relative flex min-h-screen flex-col bg-black pt-[2px] pr-[3px] pb-[2px] pl-[2px] font-['Liberation_Sans',Arial,sans-serif] text-[11px] text-black">
      <div className="flex flex-1 flex-col bg-[#8f8f8f] pt-[2px] pr-[1px] pl-[1px]">
        <div className="flex flex-1 flex-col rounded-t-md border-t-2 border-r border-b border-l-2 border-black bg-black">
          <div className="flex flex-1 flex-col rounded-t-md border-t border-r border-b border-[#3bb6d8] border-t-white bg-[#bad1ea] pr-[6px] pb-[7px] pl-[7px]">
            <div className="-mx-1 flex h-[29px] items-center bg-gradient-to-b from-[#9ab3d3] to-[#b8cfe8] pt-1 pl-[5px] font-['Noto_Sans',sans-serif] text-[12px]">
              <svg viewBox="0 0 16 13" className="mr-[5px] mb-1 h-[13px] w-4">
                <path d="M0 0h16v13H0z" fill="#f4f4f4" stroke="#8a97a8" />
                <path d="M2 2h7v8H2z" fill="#2f7d86" />
                <path d="M4 2h2v8H4z" fill="#4ba39b" />
                <path d="M13 2h1v4h-1z" fill="#345" />
              </svg>
              Movimento de Rescisão
              <button aria-label="Fechar" className="mr-1 mb-[2px] ml-auto flex h-[17px] w-8 items-center justify-center rounded-xs border border-[#4a1a1a] bg-gradient-to-b from-[#e3a096] via-[#c0452f] to-[#d4806c]">
                <svg viewBox="0 0 10 8" className="h-2 w-[10px]" fill="none">
                  <path d="M1 0l8 8M9 0L1 8" stroke="#555" strokeWidth="3.500" />
                  <path d="M1 0l8 8M9 0L1 8" stroke="#fff" strokeWidth="2" />
                </svg>
              </button>
            </div>
            <Toolbar />
            <Header />
            <div className="flex flex-1 flex-col bg-[#efefef]">
              <Tabs items={[["Cadastro", "w-[58px]"], ["Preview", "w-[48px]"], ["e-Social", "w-[49px]"]]} />
              <div className="mr-[2px] flex flex-1 flex-col border-r border-b border-[#dcdcdc] bg-white pt-1 pr-[2px] pb-[2px] pl-[6px]">
                <div className="flex flex-1 flex-col border-t border-r border-b border-l border-[#9c9c9c] pr-[3px] pb-[2px]">
                  <Tabs
                    items={[["Dados Rescisão", "w-[93px]"], ["Médias", "w-[44px]"], ["Parametros de Calculo", "w-[116px]"]]}
                  />
                  <div className="border-r border-[#dcdcdc] pt-1 pr-[2px] pb-1 pl-1">
                    <RescisaoForm />
                  </div>
                  <Tabs
                    items={[
                      ["Normal", "w-[48px]"],
                      ["Complementar", "w-[77px]"],
                      ["Inf.Sindical", "w-[64px]"],
                      ["Depto /Motivo (Processamento)", "w-[163px]"],
                      ["Empréstimo eConsignado", "w-[129px]"],
                    ]}
                    className="h-[23px] border-t"
                  />
                  <div className="flex flex-1 flex-col border-r border-b border-[#dcdcdc] pr-[2px] pb-[2px]">
                    <Actions />
                    <div className="ml-[3px] flex-1 border border-[#9c9c9c]">
                      <EventsTable />
                    </div>
                  </div>
                </div>
              </div>
            </div>
            <div className="flex h-6 items-center border-t-2 border-b border-t-white border-b-[#9c9c9c] bg-[#efefef] text-center text-[12px] font-bold">
              <div className="w-[101px] border-r border-[#dcdcdc]">00625</div>
              <div className="w-[350px] border-r border-[#dcdcdc]">JOELI CUSTODIO DO AMARAL</div>
              <div className="w-[230px] border-r border-[#dcdcdc]">Consulta</div>
              <div className="ml-auto flex h-[21px] w-[88px] items-center justify-around border-r-2 border-b-2 border-l border-[#9c9c9c] border-l-white px-1">
                <button aria-label="Primeiro registro"><NavIcon kind="first" /></button>
                <button aria-label="Registro anterior"><NavIcon kind="prev" /></button>
                <button aria-label="Próximo registro"><NavIcon kind="next" /></button>
                <button aria-label="Último registro"><NavIcon kind="last" /></button>
              </div>
            </div>
          </div>
        </div>
        <Footer />
      </div>

      <Note />
      <Summary />
      <Financeiro />
      <svg viewBox="0 0 42 42" className="pointer-events-none absolute top-[287px] left-[1026px] h-[42px] w-[42px]">
        <path d="M41 7l-7-6-23 21V4L1 12v28h29l9-9H19z" fill="#d96443" />
      </svg>
    </div>
  );
}

export default App;
